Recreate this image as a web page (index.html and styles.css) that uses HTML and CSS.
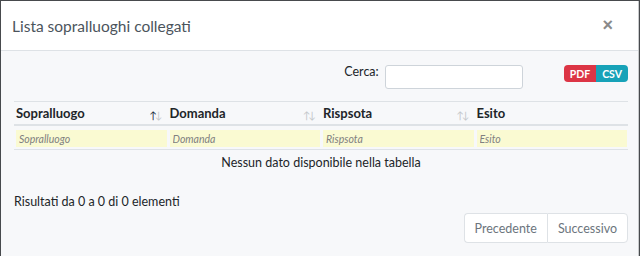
FILE: index.html
```html
<!DOCTYPE html>
<html lang="it">
<head>
    <meta charset="UTF-8">
    <title>Lista sopralluoghi collegati</title>
    <link rel="stylesheet" href="styles.css">
</head>
<body>
    <div class="modal">
        <div class="modal-header">
            <div class="modal-title">Lista sopralluoghi collegati</div>
            <button class="close">&times;</button>
        </div>
        <div class="modal-body">
            <div class="toolbar">
                <label class="search"><span>Cerca:</span> <input type="text"></label>
                <div class="export">
                    <button class="btn-pdf">PDF</button><button class="btn-csv">CSV</button>
                </div>
            </div>

            <table class="data-table">
                <thead>
                    <tr class="head-row">
                        <th>Sopralluogo <span class="sort"><i class="on">&uarr;</i><i>&darr;</i></span></th>
                        <th>Domanda <span class="sort"><i>&uarr;</i><i>&darr;</i></span></th>
                        <th>Rispsota <span class="sort"><i>&uarr;</i><i>&darr;</i></span></th>
                        <th>Esito</th>
                    </tr>
                    <tr class="filter-row">
                        <th><input type="text" placeholder="Sopralluogo"></th>
                        <th><input type="text" placeholder="Domanda"></th>
                        <th><input type="text" placeholder="Rispsota"></th>
                        <th><input type="text" placeholder="Esito"></th>
                    </tr>
                </thead>
                <tbody>
                    <tr>
                        <td class="empty" colspan="4">Nessun dato disponibile nella tabella</td>
                    </tr>
                </tbody>
            </table>

            <div class="info">Risultati da 0 a 0 di 0 elementi</div>

            <div class="pager">
                <button>Precedente</button><button>Successivo</button>
            </div>
        </div>
    </div>
</body>
</html>
```

FILE: styles.css
```css
body {
    margin: 0;
    background-color: #474a4d;
    font-family: 'Lato', 'Liberation Sans', sans-serif;
    color: #212529;
    overflow: hidden;
}

.modal {
    margin: 1px 1px 0 1px;
    height: 255px;
    background: #f7f8fa;
    border-right: 1px solid #c8cacc;
    box-sizing: border-box;
}

.modal-header {
    display: flex;
    justify-content: space-between;
    align-items: center;
    height: 49px;
    padding: 0 25px 0 11px;
    background: white;
    border-bottom: 1px solid #dee2e6;
}

.modal-title {
    font-size: 15.5px;
    color: #4b545c;
}

.close {
    background: none;
    border: none;
    padding: 0;
    font-size: 18px;
    font-weight: bold;
    color: #8a8a8a;
    font-family: 'Liberation Sans', sans-serif;
    cursor: pointer;
}

.modal-body {
    padding: 14px 10px 0 13px;
}

.toolbar {
    display: flex;
    justify-content: flex-end;
    align-items: flex-start;
    gap: 41px;
    height: 36px;
}

.search {
    display: flex;
    align-items: flex-start;
    gap: 6px;
    font-size: 12.5px;
    line-height: 14px;
    color: #212529;
}

.search input {
    width: 138px;
    height: 24px;
    margin: 0;
    box-sizing: border-box;
    border: 1px solid #ced4da;
    border-radius: 3px;
    background: white;
}

.export {
    display: flex;
}

.export button {
    height: 17px;
    padding: 0 6px;
    border: none;
    color: white;
    font-family: inherit;
    font-size: 10.5px;
    font-weight: bold;
}

.btn-pdf {
    background: #dc3545;
    border-radius: 4px 0 0 4px;
}

.btn-csv {
    background: #17a2b8;
    border-radius: 0 4px 4px 0;
}

.data-table {
    width: 100%;
    border-collapse: collapse;
    table-layout: fixed;
    border-top: 1px solid #dee2e6;
}

.head-row th {
    position: relative;
    text-align: left;
    font-size: 13px;
    line-height: 16px;
    font-weight: bold;
    padding: 3px 2px;
    border-bottom: 2px solid #dee2e6;
}

.sort {
    position: absolute;
    right: 7px;
    bottom: 1px;
    font-size: 10px;
    font-weight: normal;
    letter-spacing: -2px;
}

.sort i {
    font-style: normal;
    color: #c4c7ca;
}

.sort i.on {
    color: #1a2b3c;
}

.filter-row th {
    padding: 4px 1px 2px 2px;
    border-bottom: 1px solid #dee2e6;
}

.filter-row input {
    display: block;
    width: 100%;
    height: 17px;
    box-sizing: border-box;
    border: none;
    padding: 0 3px;
    background: #fafad2;
    font-family: inherit;
    font-size: 10.5px;
    font-style: italic;
}

.filter-row input::placeholder {
    color: #808080;
}

.empty {
    text-align: center;
    font-size: 12.5px;
    line-height: 16px;
    padding: 5px 0;
}

.info {
    margin-top: 18px;
    font-size: 12.5px;
    line-height: 16px;
}

.pager {
    display: flex;
    justify-content: flex-end;
    margin-top: 3px;
}

.pager button {
    height: 30px;
    padding: 0 10px;
    background: white;
    border: 1px solid #dee2e6;
    color: #6c757d;
    font-family: inherit;
    font-size: 12.5px;
}

.pager button:first-child {
    border-radius: 4px 0 0 4px;
    border-right: none;
}

.pager button:last-child {
    border-radius: 0 4px 4px 0;
}
```
